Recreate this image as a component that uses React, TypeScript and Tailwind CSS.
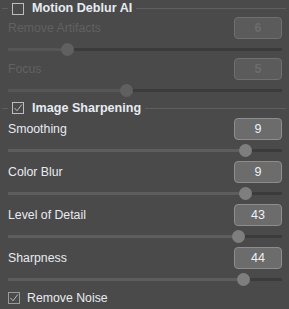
import React from "react"

type SliderProps = {
  label: string
  value: number
  pos: number
  disabled?: boolean
  className?: string
}

const font = { fontFamily: '"Liberation Sans", Arial, sans-serif' }

function Check({ checked, className }: { checked?: boolean; className?: string }) {
  return (
    <div className={"flex h-[12px] w-[12px] shrink-0 items-center justify-center border " + (className ?? "")}>
      {checked && (
        <svg width="10" height="10" viewBox="0 0 10 10" fill="none">
          <path d="M1.5 5 L4 7.8 L8.8 1.5" stroke="#b9b9b9" strokeWidth="1" />
        </svg>
      )}
    </div>
  )
}

function Header({ title, checked, className }: { title: string; checked?: boolean; className?: string }) {
  return (
    <div className={"flex items-center " + (className ?? "")}>
      <div className="ml-[2px] h-px w-[6px] bg-[#5e5e5e]" />
      <Check checked={checked} className="ml-[4px] border-[#bdbdbd]" />
      <span className="ml-[8px] text-[12.6px] font-bold text-[#e6eaf2]">{title}</span>
      <div className="ml-[4px] mr-[3px] h-px flex-1 bg-[#5e5e5e]" />
    </div>
  )
}

function Slider({ label, value, pos, disabled, className }: SliderProps) {
  return (
    <div className={className}>
      <div className="flex h-[22px] items-center justify-between">
        <span className={"text-[12.3px] " + (disabled ? "text-[#616161]" : "text-[#e8eaf0]")}>{label}</span>
        <div
          className={
            "flex h-[22px] w-[48px] items-center justify-center rounded-[4px] border text-[12.5px] " +
            (disabled
              ? "border-[#6f6f6f] bg-[#5b5b5b] font-bold text-[#6c6c6c]"
              : "border-[#8d8d8d] bg-[#6c6c6c] text-[#eef0f6]")
          }
        >
          {value}
        </div>
      </div>
      <div className="relative mt-[4px] h-[14px]">
        <div className="absolute left-0 right-0 top-[5px] flex h-[3px]">
          <div className={disabled ? "bg-[#565656]" : "bg-[#5d5d5d]"} style={{ width: pos }} />
          <div className="flex-1 bg-[#3b3b3b]" />
        </div>
        <div
          className={
            "absolute top-0 h-[13px] w-[13px] rounded-full " + (disabled ? "bg-[#606060]" : "bg-[#7e7e7e]")
          }
          style={{ left: pos - 6.5 }}
        />
      </div>
    </div>
  )
}

export default function App() {
  return (
    <div className="h-[309px] w-[289px] overflow-hidden bg-[#4a4a4a]" style={font}>
      <Header title="Motion Deblur AI" className="h-[17px]" />
      <div className="pl-[8px] pr-[7px]">
        <Slider label="Remove Artifacts" value={6} pos={59} disabled />
        <Slider label="Focus" value={5} pos={118} disabled className="mt-[1px]" />
      </div>
      <Header title="Image Sharpening" checked className="h-[20px]" />
      <div className="pl-[8px] pr-[7px]">
        <Slider label="Smoothing" value={9} pos={237} />
        <Slider label="Color Blur" value={9} pos={237} className="mt-[3px]" />
        <Slider label="Level of Detail" value={43} pos={230} className="mt-[3px]" />
        <Slider label="Sharpness" value={44} pos={235} className="mt-[3px]" />
        <div className="flex h-[22px] items-center">
          <Check checked className="border-[#9a9a9a]" />
          <span className="ml-[7px] text-[12.3px] text-[#e8eaf0]">Remove Noise</span>
        </div>
      </div>
    </div>
  )
}
